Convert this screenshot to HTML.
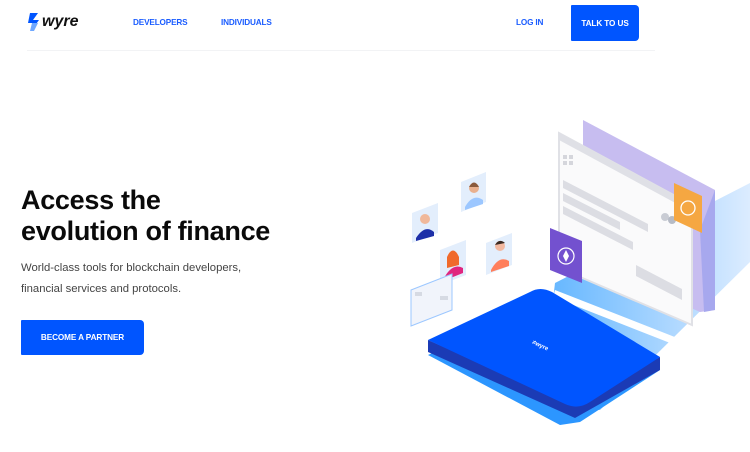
<!DOCTYPE html>
<html><head><meta charset="utf-8"><style>
*{margin:0;padding:0;box-sizing:border-box}
body{width:750px;height:452px;overflow:hidden;background:#fff;font-family:"Liberation Sans",sans-serif;position:relative}
.a{position:absolute}
.nav{font-size:8.2px;font-weight:bold;color:#1a5cff;letter-spacing:-0.15px}
h1{position:absolute;left:21px;top:185px;font-size:27px;line-height:31px;font-weight:bold;color:#0a0a0a;letter-spacing:-0.3px}
.sub{position:absolute;left:21px;top:258px;font-size:11.3px;line-height:20.5px;color:#444}
.btn{position:absolute;background:#0055ff;color:#fff;font-weight:bold;font-size:8.2px;letter-spacing:-0.1px;display:flex;align-items:center;justify-content:center;border-radius:1px 4px 4px 1px}
</style></head><body>
<svg class="a" style="left:27px;top:11px" width="60" height="22" viewBox="0 0 60 22">
<path d="M3 2 L11 2 L6 9 L12 9 L4 20 L6 12 L1 12 Z" fill="#0055ff"/>
<path d="M5 12 L11 12 L7 20 L3 20Z" fill="#6fa8ff"/>
<text x="15" y="15" font-family="Liberation Sans" font-weight="bold" font-style="italic" font-size="16" fill="#111">wyre</text>
</svg>
<div class="a nav" style="left:133px;top:18px">DEVELOPERS</div>
<div class="a nav" style="left:221px;top:18px">INDIVIDUALS</div>
<div class="a nav" style="left:516px;top:18px">LOG IN</div>
<div class="btn" style="left:571px;top:5px;width:68px;height:36px">TALK TO US</div>
<div class="a" style="left:27px;top:50px;width:628px;height:1px;background:#f2f3f5"></div>
<h1>Access the<br>evolution of finance</h1>
<div class="sub">World-class tools for blockchain developers,<br>financial services and protocols.</div>
<div class="btn" style="left:21px;top:320px;width:123px;height:35px">BECOME A PARTNER</div>
<svg class="a" style="left:0;top:0" width="750" height="452" viewBox="0 0 750 452">
<defs>
<linearGradient id="lb" x1="0" y1="0" x2="1" y2="0"><stop offset="0" stop-color="#5fb4ff"/><stop offset="1" stop-color="#dcecff"/></linearGradient>
</defs>
<polygon points="555,283 750,183 750,262 600,410 540,410" fill="url(#lb)"/>
<polygon points="583,120 715,190 715,310 700,312 583,260" fill="#c7bdf0"/>
<polygon points="700,230 715,190 715,310 704,312" fill="#a7a8ee"/>
<polygon points="559,133 692,205 692,325 559,268" fill="#fafafb" stroke="#e0e1e6" stroke-width="2"/>
<polygon points="559,133 692,205 692,212 559,140" fill="#dfe0e6"/>
<rect x="563" y="155" width="4" height="4" fill="#d5d6dc"/><rect x="569" y="155" width="4" height="4" fill="#d5d6dc"/>
<rect x="563" y="161" width="4" height="4" fill="#d5d6dc"/><rect x="569" y="161" width="4" height="4" fill="#d5d6dc"/>
<polygon points="563,180 648,224 648,232 563,188" fill="#dcdde3"/>
<polygon points="563,193 620,222 620,230 563,201" fill="#dcdde3"/>
<polygon points="563,206 633,242 633,250 563,214" fill="#dcdde3"/>
<polygon points="636,265 682,289 682,300 636,276" fill="#dcdde3"/>
<polygon points="555,290 690,343 688,350 553,297" fill="#fff"/>
<circle cx="665" cy="217" r="4" fill="#c9ccd4"/><circle cx="672" cy="220" r="4" fill="#b6bbc6"/>
<polygon points="674,183 702,196 702,233 674,220" fill="#f5a742"/>
<circle cx="688" cy="208" r="7" fill="none" stroke="#fff" stroke-width="1.3"/>
<polygon points="550,228 582,241 582,283 550,270" fill="#7351cf"/>
<circle cx="566" cy="256" r="8" fill="none" stroke="#fff" stroke-width="1.2"/>
<path d="M566 250 L569 256 L566 262 L563 256Z" fill="#fff"/>
<polygon points="428,355 540,302 660,370 580,422 560,425" fill="#2c96ff"/>
<polygon points="428,340 428,352 575,418 660,370 660,357 575,405" fill="#1b3bb5"/>
<path d="M428,340 L530,292 Q540,286 552,292 L660,357 L590,402 Q578,410 565,404 Z" fill="#0055ff"/>
<text x="532" y="347" font-size="6" font-weight="bold" fill="#fff" transform="rotate(25 540 345)">≠wyre</text>
<g>
<polygon points="412,213 438,203 438,233 412,243" fill="#e3eefc"/>
<circle cx="425" cy="219" r="5" fill="#f0b89a"/><path d="M416 238 Q425 224 434 232 L434 236 L416 241Z" fill="#1d2fa8"/>
<polygon points="461,182 486,172 486,202 461,212" fill="#e3eefc"/>
<circle cx="474" cy="188" r="5" fill="#e9b08e"/><path d="M469 187 Q474 178 479 187" fill="#8a5a3c"/><path d="M465 207 Q473 193 483 200 L483 204 L465 210Z" fill="#9cc7ff"/>
<polygon points="440,250 466,240 466,275 440,285" fill="#e3eefc"/>
<circle cx="453" cy="256" r="5" fill="#f2b8a0"/><path d="M447 257 Q453 244 459 257 L459 265 L447 268Z" fill="#f06a2c"/><path d="M443 280 Q452 262 463 268 L463 273 L443 281Z" fill="#e0267f"/>
<polygon points="486,243 512,233 512,265 486,275" fill="#e3eefc"/>
<circle cx="500" cy="246" r="5" fill="#f2b8a0"/><path d="M495 245 Q499 238 505 243" fill="#3a2a22"/><path d="M491 270 Q499 255 509 261 L509 266 L491 272Z" fill="#ff7f5c"/>
<polygon points="411,290 452,274 452,310 411,326" fill="#f1f4fb" stroke="#9cc7ff" stroke-width="1"/>
<rect x="415" y="292" width="7" height="4" fill="#d6dae3"/><rect x="440" y="296" width="8" height="4" fill="#d6dae3"/>
</g>
</svg>
</body></html>
